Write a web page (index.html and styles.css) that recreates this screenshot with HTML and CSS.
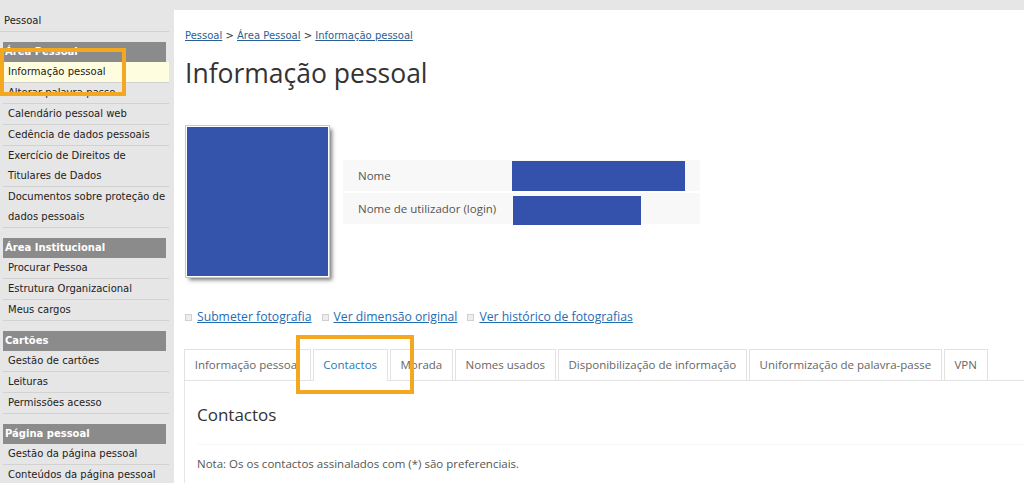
FILE: index.html
```html
<!DOCTYPE html>
<html lang="pt">
<head>
    <meta charset="UTF-8">
    <meta name="viewport" content="width=device-width, initial-scale=1.0">
    <title>Informação pessoal</title>
    <link rel="stylesheet" href="styles.css">
</head>
<body>
    <div class="page">
        <aside class="side">
            <div class="side-top">Pessoal</div>

            <div class="group">
                <div class="group-title">Área Pessoal</div>
                <ul>
                    <li class="active">Informação pessoal</li>
                    <li>Alterar palavra-passe</li>
                    <li>Calendário pessoal web</li>
                    <li>Cedência de dados pessoais</li>
                    <li>Exercício de Direitos de Titulares de Dados</li>
                    <li>Documentos sobre proteção de dados pessoais</li>
                </ul>
            </div>

            <div class="group">
                <div class="group-title">Área Institucional</div>
                <ul>
                    <li>Procurar Pessoa</li>
                    <li>Estrutura Organizacional</li>
                    <li>Meus cargos</li>
                </ul>
            </div>

            <div class="group">
                <div class="group-title">Cartões</div>
                <ul>
                    <li>Gestão de cartões</li>
                    <li>Leituras</li>
                    <li>Permissões acesso</li>
                </ul>
            </div>

            <div class="group">
                <div class="group-title">Página pessoal</div>
                <ul>
                    <li>Gestão da página pessoal</li>
                    <li>Conteúdos da página pessoal</li>
                </ul>
            </div>
        </aside>

        <main class="main">
            <div class="crumbs">
                <a href="#">Pessoal</a> &gt; <a href="#">Área Pessoal</a> &gt; <a href="#">Informação pessoal</a>
            </div>
            <h1>Informação pessoal</h1>

            <div class="person">
                <div class="photo"></div>
                <div class="info">
                    <div class="row">
                        <div class="label">Nome</div>
                        <div class="value"><div class="mask mask-name"></div></div>
                    </div>
                    <div class="row">
                        <div class="label">Nome de utilizador (login)</div>
                        <div class="value"><div class="mask mask-login"></div></div>
                    </div>
                </div>
            </div>

            <div class="photo-links">
                <span class="bullet"></span><a href="#">Submeter fotografia</a>
                <span class="bullet"></span><a href="#">Ver dimensão original</a>
                <span class="bullet"></span><a href="#">Ver histórico de fotografias</a>
            </div>

            <ul class="tabs">
                <li>Informação pessoal</li>
                <li class="current">Contactos</li>
                <li>Morada</li>
                <li>Nomes usados</li>
                <li>Disponibilização de informação</li>
                <li>Uniformização de palavra-passe</li>
                <li>VPN</li>
            </ul>

            <div class="tab-panel">
                <h2>Contactos</h2>
                <hr>
                <p class="note">Nota: Os os contactos assinalados com (*) são preferenciais.</p>
            </div>
        </main>
    </div>

    <!-- marcações a laranja por cima do ecrã -->
    <div class="mark mark-menu"></div>
    <div class="mark mark-tab"></div>
</body>
</html>
```

FILE: styles.css
```css
body {
    margin: 0;
    background-color: #e6e6e6;
    font-family: "DejaVu Sans", Verdana, sans-serif;
    color: #222;
    overflow: hidden;
}

.page {
    display: flex;
    height: 483px;
}

/* menu lateral */
.side {
    width: 166px;
    padding: 11px 5px 0 3px;
    font-size: 10px;
    flex-shrink: 0;
}

.side-top {
    line-height: 20px;
    border-bottom: 1px solid #d2d2d2;
    margin-left: -3px;
    padding-left: 4px;
}

.group {
    margin-top: 10px;
}

.group-title {
    background-color: #8b8b8b;
    color: #fff;
    font-weight: bold;
    line-height: 20px;
    padding-left: 2px;
    margin-right: 3px;
}

.side ul {
    list-style: none;
    margin: 0;
    padding: 0;
}

.side li {
    line-height: 20px;
    padding-left: 5px;
    border-bottom: 1px solid #d2d2d2;
}

.side li.active {
    background-color: #fffde0;
}

/* conteúdo */
.main {
    flex: 1;
    background-color: #fff;
    margin-top: 10px;
    padding-left: 11px;
    font-family: "Open Sans", sans-serif;
    color: #555;
}

.crumbs {
    margin-top: 18px;
    line-height: 16px;
    font-family: "DejaVu Sans", Verdana, sans-serif;
    font-size: 10px;
    color: #333;
}

.crumbs a {
    color: #2b5f94;
}

h1 {
    margin: 11px 0 0 0;
    font-size: 26.5px;
    font-weight: normal;
    line-height: 36px;
    color: #333;
}

.person {
    display: flex;
    align-items: flex-start;
    margin-top: 35px;
}

.photo {
    width: 141px;
    height: 149px;
    margin-left: 1px;
    background-color: #3453ab;
    border: 1px solid #fff;
    outline: 1px solid #c8c8c8;
    box-shadow: 3px 3px 4px #7a7a7a;
}

.info {
    width: 357px;
    margin-left: 14px;
    margin-top: 34px;
    display: flex;
    flex-direction: column;
    gap: 2px;
    font-size: 11.5px;
}

.row {
    display: flex;
    height: 31px;
    background-color: #f8f8f8;
}

.label {
    width: 154px;
    padding-left: 15px;
    line-height: 31px;
}

.mask {
    background-color: #3452ab;
}

.mask-name {
    width: 173px;
    height: 30px;
    margin-top: 1px;
}

.mask-login {
    width: 128px;
    height: 29px;
    margin-top: 3px;
    margin-left: 1px;
}

.photo-links {
    margin-top: 31px;
    line-height: 18px;
    font-size: 12.2px;
    display: flex;
    align-items: center;
}

.photo-links a {
    color: #1f6cb3;
    margin-right: 10px;
}

.bullet {
    display: inline-block;
    width: 5px;
    height: 5px;
    background-color: #eee;
    border: 1px solid #d0d0d0;
    margin-right: 5px;
}

/* separadores */
.tabs {
    list-style: none;
    margin: 23px 0 0 -1px;
    padding: 0;
    display: flex;
    gap: 2px;
    border-bottom: 1px solid #e2e2e2;
    font-size: 11.5px;
}

.tabs li {
    line-height: 30px;
    padding: 0 9.7px;
    border: 1px solid #e2e2e2;
    border-bottom: none;
    color: #666;
}

.tabs li.current {
    color: #2a78b5;
    position: relative;
    margin-bottom: -1px;
    padding-bottom: 1px;
    background-color: #fff;
}

.tab-panel {
    margin-left: -1px;
    padding-left: 12px;
    border-left: 1px solid #e6e6e6;
    height: 120px;
}

h2 {
    margin: 0;
    padding-top: 22px;
    font-size: 17px;
    font-weight: normal;
    line-height: 24px;
    color: #333;
}

hr {
    margin: 17px 0 0 0;
    border: none;
    border-top: 1px solid #f7f7f7;
}

.note {
    margin: 10px 0 0 0;
    font-size: 11.5px;
    line-height: 18px;
}

/* marcações */
.mark {
    position: absolute;
    border: 4px solid #f3a820;
    box-sizing: border-box;
}

.mark-menu {
    left: 0;
    top: 48px;
    width: 126px;
    height: 48px;
}

.mark-tab {
    left: 296px;
    top: 335px;
    width: 118px;
    height: 59px;
}
```
